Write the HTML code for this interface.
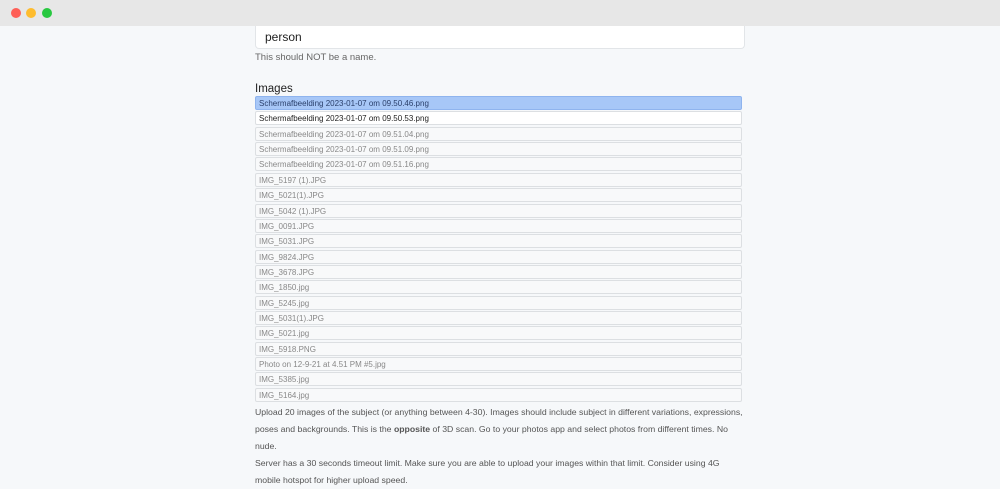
<!DOCTYPE html><html><head><style>
body{margin:0;width:1000px;height:477px;overflow:hidden;background:#f6f8fa;font-family:"Liberation Sans",sans-serif;position:relative}
.bar{position:absolute;left:0;top:0;width:1000px;height:26px;background:#e7e7e7}
.d{position:absolute;top:8px;width:10px;height:10px;border-radius:50%}
.inp{position:absolute;left:255px;top:26px;width:488px;height:22px;background:#fff;border:1px solid #e2e5e8;border-top:none;border-radius:0 0 4px 4px;font-size:12px;line-height:22px;text-indent:9px;color:#222}
.hint{position:absolute;left:255px;top:52px;font-size:9.5px;color:#666}
.lbl{position:absolute;left:255px;top:83px;font-size:11.5px;color:#222}
.rows{position:absolute;left:255px;top:96px;width:487px}
.r{box-sizing:border-box;height:14px;margin-bottom:1.37px;border:1px solid #dcdfe2;border-radius:2px;font-size:8px;line-height:13px;padding-left:3px;color:#888;background:#f8f9fa;white-space:nowrap}
.sel{background:#a7c7f7;border-color:#8fb4ee;color:#2a3f6a}
.dk{color:#222;background:#fff}
.p{position:absolute;left:255px;top:404px;width:490px;font-size:8.7px;line-height:17px;color:#555}
</style></head><body>
<div class="bar"><div class="d" style="left:11px;background:#fe5f57"></div><div class="d" style="left:26px;background:#febc2e"></div><div class="d" style="left:42px;background:#28c840"></div></div>
<div class="inp">person</div>
<div class="hint">This should NOT be a name.</div>
<div class="lbl">Images</div>
<div class="rows">
<div class="r sel">Schermafbeelding 2023-01-07 om 09.50.46.png</div>
<div class="r dk">Schermafbeelding 2023-01-07 om 09.50.53.png</div>
<div class="r">Schermafbeelding 2023-01-07 om 09.51.04.png</div>
<div class="r">Schermafbeelding 2023-01-07 om 09.51.09.png</div>
<div class="r">Schermafbeelding 2023-01-07 om 09.51.16.png</div>
<div class="r">IMG_5197 (1).JPG</div>
<div class="r">IMG_5021(1).JPG</div>
<div class="r">IMG_5042 (1).JPG</div>
<div class="r">IMG_0091.JPG</div>
<div class="r">IMG_5031.JPG</div>
<div class="r">IMG_9824.JPG</div>
<div class="r">IMG_3678.JPG</div>
<div class="r">IMG_1850.jpg</div>
<div class="r">IMG_5245.jpg</div>
<div class="r">IMG_5031(1).JPG</div>
<div class="r">IMG_5021.jpg</div>
<div class="r">IMG_5918.PNG</div>
<div class="r">Photo on 12-9-21 at 4.51 PM #5.jpg</div>
<div class="r">IMG_5385.jpg</div>
<div class="r">IMG_5164.jpg</div>
</div>
<div class="p">Upload 20 images of the subject (or anything between 4-30). Images should include subject in different variations, expressions, poses and backgrounds. This is the <b>opposite</b> of 3D scan. Go to your photos app and select photos from different times. No nude.<br>Server has a 30 seconds timeout limit. Make sure you are able to upload your images within that limit. Consider using 4G mobile hotspot for higher upload speed.</div>
</body></html>
